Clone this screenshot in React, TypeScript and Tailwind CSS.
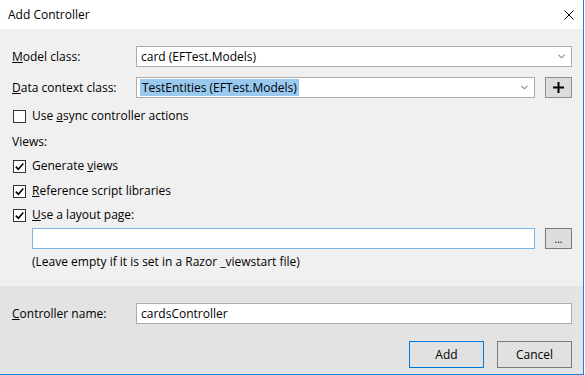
import React from 'react';

const FONT = "font-['Segoe_UI','Open_Sans','Noto_Sans',sans-serif]";

function Chevron() {
  return (
    <svg width="7" height="5" viewBox="0 0 7 5" className="shrink-0">
      <path d="M0.5 0.8 L3.5 3.8 L6.5 0.8" fill="none" stroke="#8a8a8a" strokeWidth="1.1" />
    </svg>
  );
}

function Check({ checked }: { checked: boolean }) {
  return (
    <div className="w-[13px] h-[13px] border border-[#333333] bg-white flex items-center justify-center shrink-0">
      {checked && (
        <svg width="11" height="11" viewBox="0 0 11 11">
          <path d="M1.8 5.6 L4.3 8.2 L9.3 2.4" fill="none" stroke="#000000" strokeWidth="1.6" />
        </svg>
      )}
    </div>
  );
}

function CheckRow({ checked, children, className = '' }: { checked: boolean; children: React.ReactNode; className?: string }) {
  return (
    <div className={`flex items-center h-[24px] pl-[1px] gap-[6px] ${className}`}>
      <Check checked={checked} />
      <span>{children}</span>
    </div>
  );
}

export default function App() {
  return (
    <div className={`w-[585px] h-[375px] flex bg-white text-[12px] text-black ${FONT}`}>
      <div className="w-[584px] h-[375px] flex flex-col border-r border-b border-[#1883d7]">
        {/* title bar */}
        <div className="h-[29px] bg-white flex items-center justify-between pl-2 pr-[9px] shrink-0">
          <span className="text-[12px]">Add Controller</span>
          <svg width="10" height="10" viewBox="0 0 10 10">
            <path d="M0.5 0.5 L9.5 9.5 M9.5 0.5 L0.5 9.5" stroke="#000000" strokeWidth="1" />
          </svg>
        </div>

        {/* body */}
        <div className="h-[257px] bg-[#f0f0f0] pt-[17px] pl-3 pr-[11px] shrink-0">
          <div className="flex items-center h-[21px]">
            <span className="w-[124px]"><u>M</u>odel class:</span>
            <div className="flex-1 h-[21px] bg-white border border-[#acacac] flex items-center justify-between pl-[4px] pr-[6px]">
              <span>card (EFTest.Models)</span>
              <Chevron />
            </div>
          </div>

          <div className="flex items-center h-[21px] mt-[10px]">
            <span className="w-[124px]"><u>D</u>ata context class:</span>
            <div className="w-[399px] h-[21px] bg-white border border-[#acacac] flex items-center justify-between pl-[3px] pr-[6px]">
              <span className="bg-[#99c9ef] h-[17px] leading-[17px] px-[2px]">TestEntities (EFTest.Models)</span>
              <Chevron />
            </div>
            <div className="ml-[10px] w-[27px] h-[21px] bg-[#dddddd] border border-[#8f8f8f] flex items-center justify-center">
              <svg width="11" height="11" viewBox="0 0 11 11">
                <path d="M5.5 0 V11 M0 5.5 H11" stroke="#000000" strokeWidth="2" />
              </svg>
            </div>
          </div>

          <CheckRow checked={false} className="mt-[6px]">
            Use <u>a</u>sync controller actions
          </CheckRow>

          <div className="flex items-center h-[24px] mt-[2px]">Views:</div>

          <CheckRow checked={true}>
            Generate <u>v</u>iews
          </CheckRow>
          <CheckRow checked={true} className="mt-[1px]">
            <u>R</u>eference script libraries
          </CheckRow>
          <CheckRow checked={true}>
            <u>U</u>se a layout page:
          </CheckRow>

          <div className="flex items-center mt-[1px] pl-[20px]">
            <div className="w-[503px] h-[21px] bg-white border border-[#7eb4ea]" />
            <div className="ml-[10px] w-[27px] h-[21px] bg-[#dddddd] border border-[#7a7a7a] flex items-end justify-center pb-[4px] text-[10px] leading-none">
              ...
            </div>
          </div>

          <div className="flex items-center h-[24px] mt-[1px] pl-[20px]">
            (Leave empty if it is set in a Razor _viewstart file)
          </div>
        </div>

        {/* footer */}
        <div className="flex-1 bg-[#e3e3e3] pt-[17px] pl-3 pr-[11px]">
          <div className="flex items-center h-[21px]">
            <span className="w-[124px]"><u>C</u>ontroller name:</span>
            <div className="flex-1 h-[21px] bg-white border border-[#acacac] flex items-center pl-[4px]">
              cardsController
            </div>
          </div>
          <div className="flex justify-end gap-[13px] mt-[17px]">
            <button className="w-[75px] h-[27px] bg-[#e1e1e1] border border-[#0078d7]">Add</button>
            <button className="w-[75px] h-[27px] bg-[#e1e1e1] border border-[#7a7a7a]">Cancel</button>
          </div>
        </div>
      </div>
    </div>
  );
}
